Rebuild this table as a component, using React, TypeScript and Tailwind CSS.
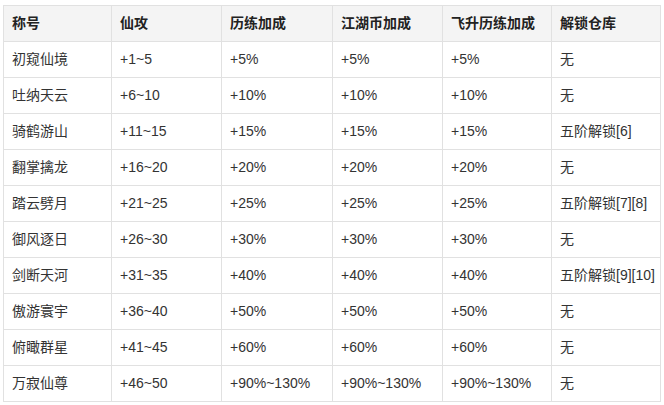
import React from "react";

const header = ["称号", "仙攻", "历练加成", "江湖币加成", "飞升历练加成", "解锁仓库"];
const rows: string[][] = [
  ["初窥仙境", "+1~5", "+5%", "+5%", "+5%", "无"],
  ["吐纳天云", "+6~10", "+10%", "+10%", "+10%", "无"],
  ["骑鹤游山", "+11~15", "+15%", "+15%", "+15%", "五阶解锁[6]"],
  ["翻掌擒龙", "+16~20", "+20%", "+20%", "+20%", "无"],
  ["踏云劈月", "+21~25", "+25%", "+25%", "+25%", "五阶解锁[7][8]"],
  ["御风逐日", "+26~30", "+30%", "+30%", "+30%", "无"],
  ["剑断天河", "+31~35", "+40%", "+40%", "+40%", "五阶解锁[9][10]"],
  ["傲游寰宇", "+36~40", "+50%", "+50%", "+50%", "无"],
  ["俯瞰群星", "+41~45", "+60%", "+60%", "+60%", "无"],
  ["万寂仙尊", "+46~50", "+90%~130%", "+90%~130%", "+90%~130%", "无"],
];

const widths = ["w-[108px]", "w-[110px]", "w-[111px]", "w-[110px]", "w-[109px]", "w-[109px]"];

export default function App() {
  return (
    <div
      className="w-[664px] h-[405px] bg-white pt-[5px] pl-[3px]"
      style={{ fontFamily: '"Liberation Sans", "Noto Sans CJK SC", sans-serif' }}
    >
      <table className="border-collapse w-[658px] table-fixed text-[14px] text-[#333]">
        <thead>
          <tr className="h-[36px] bg-[#f4f4f4]">
            {header.map((h, i) => (
              <th
                key={i}
                className={`${widths[i]} border border-[#e1e1e1] px-[8px] text-left font-bold text-[#222] align-middle`}
              >
                {h}
              </th>
            ))}
          </tr>
        </thead>
        <tbody>
          {rows.map((r, ri) => (
            <tr key={ri} className="h-[36px]">
              {r.map((c, ci) => (
                <td
                  key={ci}
                  className="border border-[#e1e1e1] px-[8px] text-left align-middle whitespace-nowrap"
                >
                  {c}
                </td>
              ))}
            </tr>
          ))}
        </tbody>
      </table>
    </div>
  );
}
